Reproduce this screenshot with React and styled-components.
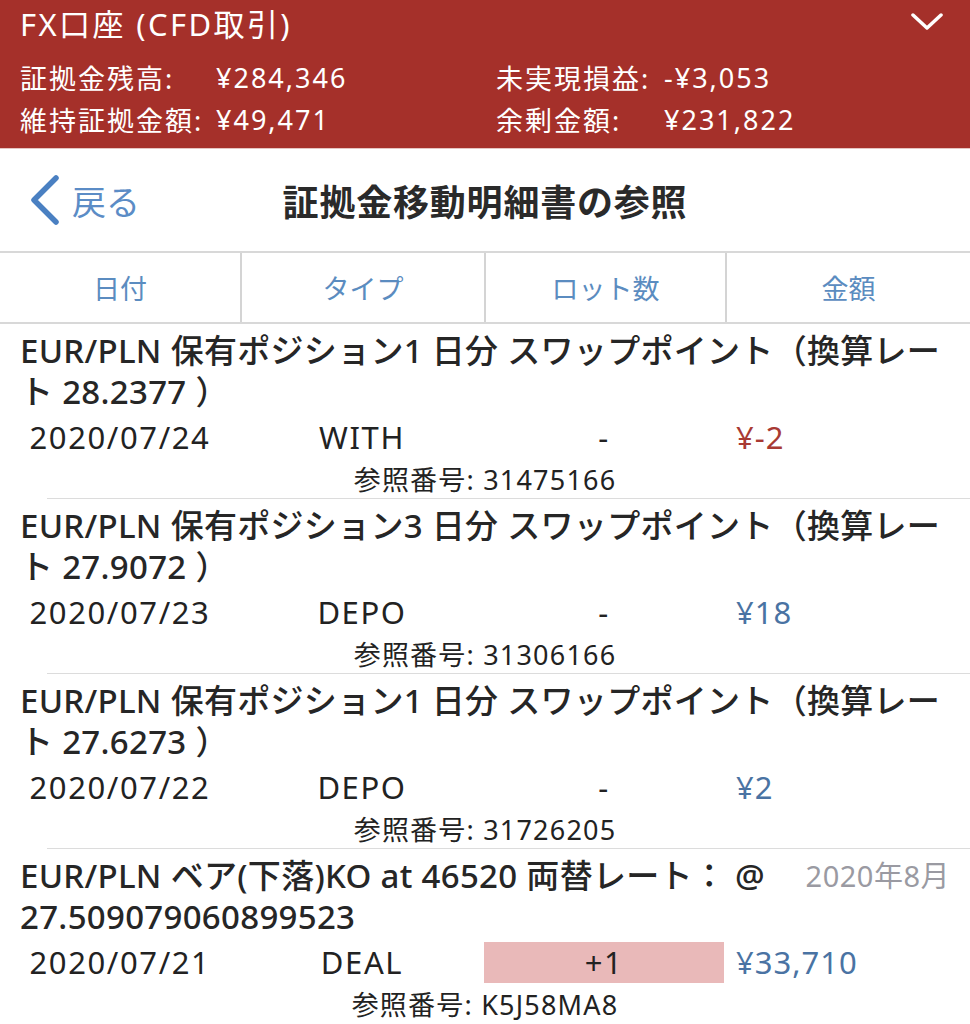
import styled, { createGlobalStyle } from 'styled-components';

const GlobalStyle = createGlobalStyle`
  body {
    margin: 0;
    background: #fff;
    font-family: "Noto Sans", "Noto Sans CJK JP", sans-serif;
    color: #222;
  }
`;

const Page = styled.div`
  width: 970px;
  height: 1024px;
  overflow: hidden;
`;

const AccountBar = styled.header`
  background: #a5302a;
  color: #fff;
  padding: 0 0 8px 20px;
  border-bottom: 1px solid #e6c4c1;
`;

const AccountTitleRow = styled.div`
  display: flex;
  align-items: center;
  justify-content: space-between;
  height: 44px;
  padding-right: 27px;
  font-size: 31px;
  letter-spacing: 2.4px;
  margin-bottom: 12px;
`;

const Stats = styled.div`
  display: grid;
  grid-template-columns: 196px 280px 168px 1fr;
  grid-auto-rows: 42px;
  align-items: center;
  font-size: 27px;
  letter-spacing: 2px;
`;

const NavBar = styled.nav`
  display: grid;
  grid-template-columns: 1fr auto 1fr;
  align-items: center;
  height: 102px;
  border-bottom: 2px solid #d8d8d8;
`;

const BackButton = styled.div`
  display: flex;
  align-items: center;
  gap: 12px;
  padding-left: 30px;
  color: #5b8cc6;
  font-size: 34px;
`;

const NavTitle = styled.h1`
  margin: 0;
  font-size: 36px;
  font-weight: 700;
  color: #2a2a2a;
  letter-spacing: 0.8px;
`;

const Columns = styled.div`
  display: grid;
  grid-template-columns: 240px 244px 241px 1fr;
`;

const HeadRow = styled(Columns)`
  height: 69px;
  border-bottom: 2px solid #d8d8d8;
`;

const HeadCell = styled.div`
  display: flex;
  align-items: center;
  justify-content: center;
  font-size: 27px;
  color: #5b8cc0;
  border-left: ${(p) => (p.$first ? 'none' : '2px solid #d4d4d4')};
`;

const Entry = styled.section`
  padding-top: 6px;
`;

const TitleLine = styled.div`
  display: flex;
  align-items: flex-start;
  padding: 0 20px;
  min-height: 82px;
`;

const TitleText = styled.div`
  flex: 1 1 auto;
  min-width: 0;
  font-size: 33px;
  font-weight: 500;
  line-height: 41px;
  letter-spacing: 0.3px;
  color: #262626;
`;

const Stamp = styled.div`
  flex: 0 0 auto;
  margin-left: 22px;
  white-space: nowrap;
  font-size: 29px;
  line-height: 41px;
  letter-spacing: 0.5px;
  color: #9a9aa2;
`;

const DataRow = styled(Columns)`
  height: 50px;
  align-items: center;
  font-size: 31px;
  letter-spacing: 1.6px;
`;

const DataCell = styled.div`
  text-align: center;
`;

const LotCell = styled.div`
  height: 41px;
  line-height: 41px;
  text-align: center;
  background: ${(p) => (p.$filled ? '#e9b9b9' : 'transparent')};
  margin-right: 1px;
`;

const Amount = styled.div`
  padding-left: 11px;
  letter-spacing: 1px;
  color: ${(p) => (p.$negative ? '#a83a34' : '#4a73a3')};
`;

const RefLine = styled.div`
  height: 36px;
  line-height: 36px;
  text-align: center;
  font-size: 27px;
  letter-spacing: 1.2px;
`;

const Divider = styled.div`
  height: 1px;
  margin-left: 47px;
  background: #dcdcdc;
`;

const ChevronDown = () => (
  <svg width="32" height="18" viewBox="0 0 32 18">
    <polyline points="2,2 16,15 30,2" fill="none" stroke="#fff" strokeWidth="3.5" strokeLinecap="round" strokeLinejoin="round" />
  </svg>
);

const ChevronLeft = () => (
  <svg width="30" height="50" viewBox="0 0 30 50">
    <polyline points="26,3 4,25 26,47" fill="none" stroke="#4a80c2" strokeWidth="5.5" strokeLinecap="round" strokeLinejoin="round" />
  </svg>
);

const entries = [
  {
    title: 'EUR/PLN 保有ポジション1 日分 スワップポイント（換算レート 28.2377 ）',
    date: '2020/07/24',
    type: 'WITH',
    lot: '-',
    amount: '¥-2',
    negative: true,
    ref: '31475166',
  },
  {
    title: 'EUR/PLN 保有ポジション3 日分 スワップポイント（換算レート 27.9072 ）',
    date: '2020/07/23',
    type: 'DEPO',
    lot: '-',
    amount: '¥18',
    ref: '31306166',
  },
  {
    title: 'EUR/PLN 保有ポジション1 日分 スワップポイント（換算レート 27.6273 ）',
    date: '2020/07/22',
    type: 'DEPO',
    lot: '-',
    amount: '¥2',
    ref: '31726205',
  },
  {
    title: 'EUR/PLN ベア(下落)KO at 46520 両替レート： @ 27.509079060899523',
    stamp: '2020年8月',
    date: '2020/07/21',
    type: 'DEAL',
    lot: '+1',
    lotFilled: true,
    amount: '¥33,710',
    ref: 'K5J58MA8',
  },
];

function App() {
  return (
    <Page>
      <GlobalStyle />
      <AccountBar>
        <AccountTitleRow>
          <span>FX口座 (CFD取引)</span>
          <ChevronDown />
        </AccountTitleRow>
        <Stats>
          <span>証拠金残高:</span>
          <span>¥284,346</span>
          <span>未実現損益:</span>
          <span>-¥3,053</span>
          <span>維持証拠金額:</span>
          <span>¥49,471</span>
          <span>余剰金額:</span>
          <span>¥231,822</span>
        </Stats>
      </AccountBar>

      <NavBar>
        <BackButton>
          <ChevronLeft />
          <span>戻る</span>
        </BackButton>
        <NavTitle>証拠金移動明細書の参照</NavTitle>
        <div />
      </NavBar>

      <HeadRow>
        <HeadCell $first>日付</HeadCell>
        <HeadCell>タイプ</HeadCell>
        <HeadCell>ロット数</HeadCell>
        <HeadCell>金額</HeadCell>
      </HeadRow>

      {entries.map((e, i) => (
        <Entry key={e.ref}>
          <TitleLine>
            <TitleText>{e.title}</TitleText>
            {e.stamp && <Stamp>{e.stamp}</Stamp>}
          </TitleLine>
          <DataRow>
            <DataCell>{e.date}</DataCell>
            <DataCell>{e.type}</DataCell>
            <LotCell $filled={e.lotFilled}>{e.lot}</LotCell>
            <Amount $negative={e.negative}>{e.amount}</Amount>
          </DataRow>
          <RefLine>参照番号: {e.ref}</RefLine>
          {i < entries.length - 1 && <Divider />}
        </Entry>
      ))}
    </Page>
  );
}

export default App;
